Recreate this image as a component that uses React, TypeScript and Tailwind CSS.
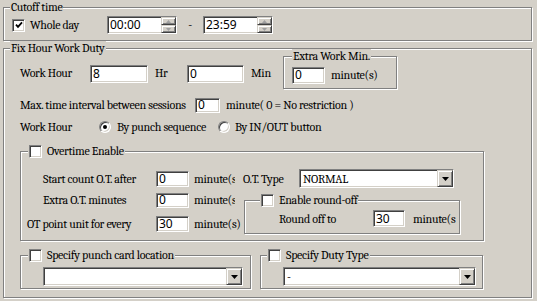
import React from "react";

const sunken =
  "border border-t-[#808080] border-l-[#808080] border-b-white border-r-white shadow-[inset_1px_1px_0_#404040,inset_-1px_-1px_0_#d4d0c8]";
const raised =
  "border border-t-[#d4d0c8] border-l-[#d4d0c8] border-b-[#404040] border-r-[#404040] shadow-[inset_1px_1px_0_#fff,inset_-1px_-1px_0_#808080] bg-[#d4d0c8]";
const etched = "border border-[#808080] shadow-[inset_1px_1px_0_#fff,1px_1px_0_#fff]";

function Check({ checked = false }: { checked?: boolean }) {
  return (
    <span className={`flex w-[13px] h-[13px] shrink-0 items-center justify-center bg-white ${sunken}`}>
      {checked && (
        <svg width="8" height="8" viewBox="0 0 8 8">
          <path d="M1 3.6 L3 5.8 L7 1.4" fill="none" stroke="#000" strokeWidth="1.8" />
        </svg>
      )}
    </span>
  );
}

function Radio({ checked = false }: { checked?: boolean }) {
  return (
    <span className="flex w-[12px] h-[12px] shrink-0 items-center justify-center rounded-full bg-white border border-t-[#808080] border-l-[#808080] border-b-white border-r-white shadow-[inset_1px_1px_0_#404040,inset_-1px_-1px_0_#d4d0c8]">
      {checked && <span className="w-[4px] h-[4px] rounded-full bg-black" />}
    </span>
  );
}

function Field({ className, value }: { className: string; value: string }) {
  return (
    <div
      className={`flex shrink-0 items-center bg-white pl-[2px] font-sans text-[12px] tracking-normal leading-none ${sunken} ${className}`}
    >
      {value}
    </div>
  );
}

function SpinField({ value }: { value: string }) {
  return (
    <div
      className={`flex w-[70px] h-[18px] shrink-0 bg-white font-sans text-[12px] tracking-normal leading-none ${sunken}`}
    >
      <span className="flex flex-1 items-center pl-[2px]">{value}</span>
      <span className="flex w-[15px] flex-col">
        <span className={`flex flex-1 items-center justify-center ${raised}`}>
          <svg width="5" height="3" viewBox="0 0 5 3">
            <path d="M0 3 L2.5 0 L5 3 Z" fill="#a0a0a0" />
          </svg>
        </span>
        <span className={`flex flex-1 items-center justify-center ${raised}`}>
          <svg width="5" height="3" viewBox="0 0 5 3">
            <path d="M0 0 L2.5 3 L5 0 Z" fill="#a0a0a0" />
          </svg>
        </span>
      </span>
    </div>
  );
}

function Combo({ className, value }: { className: string; value: string }) {
  return (
    <div className={`flex shrink-0 bg-white ${sunken} ${className}`}>
      <span className="flex flex-1 items-center pl-[3px] text-[12px]">{value}</span>
      <span className={`flex w-[16px] items-center justify-center ${raised}`}>
        <svg width="7" height="4" viewBox="0 0 7 4">
          <path d="M0 0 L7 0 L3.5 4 Z" fill="#000" />
        </svg>
      </span>
    </div>
  );
}

function Group({
  className,
  label,
  left,
  children,
}: {
  className: string;
  label: React.ReactNode;
  left: string;
  children?: React.ReactNode;
}) {
  return (
    <div className={`relative shrink-0 ${etched} ${className}`}>
      <div className={`absolute top-[-8px] ${left} flex h-[14px] items-center gap-[5px] bg-[#d4d0c8] px-[1px] leading-[14px] whitespace-nowrap`}>
        {label}
      </div>
      {children}
    </div>
  );
}

export default function App() {
  return (
    <div className="w-[537px] h-[301px] overflow-hidden bg-[#d4d0c8] pt-[7px] pl-[3px] font-serif text-[12px] tracking-[-0.3px] text-black">
      {/* Cutoff time */}
      <Group className="w-[529px] h-[34px]" left="left-[6px]" label="Cutoff time">
        <div className="flex h-full items-center pt-[2px] pl-[8px]">
          <Check checked />
          <span className="w-[82px] pl-[5px]">Whole day</span>
          <SpinField value="00:00" />
          <span className="w-[26px] text-center">-</span>
          <SpinField value="23:59" />
        </div>
      </Group>

      {/* Fix Hour Work Duty */}
      <Group className="mt-[7px] w-[529px] h-[250px]" left="left-[6px]" label="Fix Hour Work Duty">
        <div className="flex h-[33px] mt-[7px] items-center">
          <span className="w-[86px] pl-[16px]">Work Hour</span>
          <Field className="w-[58px] h-[18px] mt-[2px]" value="8" />
          <span className="w-[39px] pl-[7px]">Hr</span>
          <Field className="w-[57px] h-[18px] mt-[2px]" value="0" />
          <span className="w-[39px] pl-[7px]">Min</span>
          <Group className="w-[114px] h-[33px]" left="left-[8px]" label="Extra Work Min.">
            <div className="flex mt-[9px] ml-[8px] items-center">
              <Field className="w-[33px] h-[17px]" value="0" />
              <span className="pl-[6px]">minute(s)</span>
            </div>
          </Group>
        </div>

        <div className="flex h-[16px] mt-[8px] items-center">
          <span className="w-[191px] pl-[16px] whitespace-nowrap">Max. time interval between sessions</span>
          <Field className="w-[25px] h-[15px]" value="0" />
          <span className="pl-[6px] whitespace-nowrap">minute( 0 = No restriction )</span>
        </div>

        <div className="flex h-[16px] mt-[6px] items-center">
          <span className="w-[95px] pl-[16px]">Work Hour</span>
          <Radio checked />
          <span className="w-[107px] pl-[6px] whitespace-nowrap">By punch sequence</span>
          <Radio />
          <span className="pl-[5px] whitespace-nowrap">By IN/OUT button</span>
        </div>

        {/* Overtime */}
        <Group
          className="mt-[16px] ml-[16px] w-[464px] h-[90px]"
          left="left-[7px]"
          label={
            <>
              <Check />
              <span>Overtime Enable</span>
            </>
          }
        >
          <div className="flex h-[19px] mt-[17px] items-center">
            <span className="w-[135px] pl-[22px] whitespace-nowrap">Start count O.T. after</span>
            <Field className="w-[33px] h-[16px]" value="0" />
            <span className="w-[46px] pl-[5px] overflow-hidden whitespace-nowrap">minute(s</span>
            <span className="w-[64px] pl-[8px] whitespace-nowrap">O.T. Type</span>
            <Combo className="w-[155px] h-[19px]" value="NORMAL" />
          </div>

          <div className="flex mt-[4px]">
            <div className="flex w-[223px] flex-col">
              <div className="flex h-[16px] items-center">
                <span className="w-[135px] pl-[22px] whitespace-nowrap">Extra O.T. minutes</span>
                <Field className="w-[33px] h-[15px]" value="0" />
                <span className="w-[46px] pl-[5px] overflow-hidden whitespace-nowrap">minute(s</span>
              </div>
              <div className="flex h-[16px] mt-[8px] items-center">
                <span className="w-[135px] pl-[6px] whitespace-nowrap">OT point unit for every</span>
                <Field className="w-[33px] h-[16px]" value="30" />
                <span className="pl-[5px] whitespace-nowrap">minute(s)</span>
              </div>
            </div>

            <Group
              className="mt-[8px] w-[216px] h-[34px]"
              left="left-[15px]"
              label={
                <>
                  <Check />
                  <span>Enable round-off</span>
                </>
              }
            >
              <div className="flex h-[17px] mt-[9px] items-center">
                <span className="w-[128px] pl-[34px] whitespace-nowrap">Round off to</span>
                <Field className="w-[32px] h-[17px]" value="30" />
                <span className="w-[53px] pl-[8px] overflow-hidden whitespace-nowrap">minute(s</span>
              </div>
            </Group>
          </div>
        </Group>

        {/* bottom groups */}
        <div className="flex mt-[14px] ml-[16px] gap-[9px]">
          <Group
            className="w-[231px] h-[34px]"
            left="left-[7px]"
            label={
              <>
                <Check />
                <span>Specify punch card location</span>
              </>
            }
          >
            <Combo className="ml-[22px] mt-[11px] w-[200px] h-[19px]" value="" />
          </Group>
          <Group
            className="w-[223px] h-[34px]"
            left="left-[6px]"
            label={
              <>
                <Check />
                <span>Specify Duty Type</span>
              </>
            }
          >
            <Combo className="ml-[22px] mt-[11px] w-[193px] h-[19px]" value="-" />
          </Group>
        </div>
      </Group>
    </div>
  );
}
